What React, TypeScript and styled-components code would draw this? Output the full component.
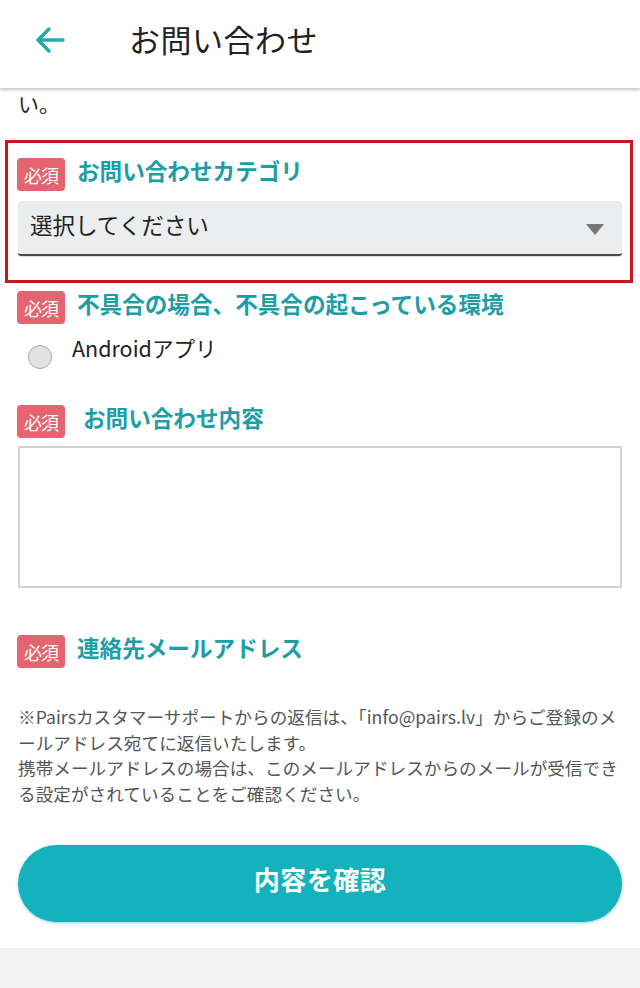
import React from "react";
import styled, { createGlobalStyle } from "styled-components";

const GlobalStyle = createGlobalStyle`
	html, body {
		margin: 0;
		padding: 0;
		background: #f2f2f2;
	}
	body {
		font-family: "Noto Sans CJK JP", "Noto Sans", sans-serif;
		color: #222;
	}
`;

const Page = styled.div`
	width: 640px;
	min-height: 988px;
	background: #f2f2f2;
`;

const Header = styled.header`
	position: relative;
	z-index: 1;
	height: 88px;
	display: flex;
	align-items: center;
	background: #fff;
	box-shadow: 0 2px 3px rgba(0, 0, 0, 0.22);
`;

const BackButton = styled.button`
	width: 30px;
	height: 30px;
	margin-left: 35px;
	margin-top: -8px;
	padding: 0;
	border: 0;
	background: none;
	display: flex;
	align-items: center;
	justify-content: center;
`;

const HeaderTitle = styled.h1`
	margin: -12px 0 0 64px;
	font-size: 31px;
	font-weight: 400;
	color: #222;
	letter-spacing: 0.5px;
`;

const Main = styled.main`
	background: #fff;
	padding: 0 18px 26px;
`;

const LeadText = styled.p`
	margin: 0;
	padding-top: 1px;
	padding-bottom: 1px;
	font-size: 21px;
	line-height: 28px;
	color: #222;
`;

const Highlight = styled.section`
	margin: 22px -11px 0 -13px;
	padding: 15px 8px 24px 10px;
	border: 3px solid #c8161d;
`;

const Field = styled.section<{ $top: number }>`
	margin-top: ${(p) => p.$top}px;
`;

const LabelRow = styled.div<{ $gap?: number }>`
	display: flex;
	align-items: center;
	gap: ${(p) => p.$gap ?? 12}px;
	height: 33px;
`;

const Badge = styled.span`
	display: inline-flex;
	align-items: center;
	justify-content: center;
	width: 48px;
	height: 33px;
	border-radius: 4px;
	background: #e5646f;
	color: #fff;
	font-size: 18px;
	letter-spacing: -1px;
	flex-shrink: 0;
	margin-left: -1px;
`;

const Label = styled.span`
	font-size: 22.6px;
	font-weight: 700;
	color: #1c9ea7;
	margin-top: -9px;
`;

const Select = styled.div`
	margin-top: 10px;
	height: 53px;
	display: flex;
	align-items: center;
	justify-content: space-between;
	padding: 0 18px 0 12px;
	background: #ecedee;
	border-radius: 4px 4px 3px 3px;
	border-bottom: 2px solid #4a4a4a;
	box-shadow: 0 1px 1px rgba(0, 0, 0, 0.15);
	font-size: 22.5px;
	color: #222;
`;

const SelectText = styled.span`
	margin-top: -7px;
`;

const Caret = styled.span`
	width: 0;
	height: 0;
	border-left: 9px solid transparent;
	border-right: 9px solid transparent;
	border-top: 11px solid #777;
	margin-top: 4px;
`;

const RadioRow = styled.label`
	display: flex;
	align-items: center;
	gap: 20px;
	margin-top: 14px;
	padding-left: 10px;
	height: 28px;
	font-size: 21.5px;
	color: #222;
`;

const RadioDot = styled.span`
	width: 22px;
	height: 22px;
	border-radius: 50%;
	background: #e2e2e2;
	border: 1.5px solid #a9a9a9;
	box-sizing: content-box;
	margin-top: 10px;
`;

const RadioText = styled.span`
	margin-top: -10px;
`;

const TextArea = styled.textarea`
	display: block;
	margin-top: 8px;
	width: 100%;
	height: 142px;
	box-sizing: border-box;
	border: 2px solid #d2d2d2;
	border-radius: 0;
	resize: none;
	font-family: inherit;
	background: #fff;
`;

const Note = styled.p`
	margin: 36px 0 0;
	font-size: 17.6px;
	line-height: 25.5px;
	color: #555;
	letter-spacing: 0.05px;
`;

const NoteLine = styled.span`
	display: block;
	white-space: nowrap;
`;

const SubmitButton = styled.button`
	display: block;
	width: 100%;
	height: 77px;
	margin-top: 39px;
	padding: 0 0 10px;
	border: 0;
	border-radius: 39px;
	background: #14b2bc;
	box-shadow: 0 1px 3px rgba(0, 160, 170, 0.45);
	color: #fff;
	font-family: inherit;
	font-size: 26px;
	font-weight: 700;
	letter-spacing: 0.5px;
`;

const BackArrow = () => (
	<svg width="30" height="28" viewBox="0 0 30 28" fill="none">
		<path
			d="M28 14H4M14 3L3 14l11 11"
			stroke="#26a9aa"
			strokeWidth="3.4"
			strokeLinecap="round"
			strokeLinejoin="round"
		/>
	</svg>
);

const App = () => {
	return (
		<Page>
			<GlobalStyle />
			<Header>
				<BackButton aria-label="戻る">
					<BackArrow />
				</BackButton>
				<HeaderTitle>お問い合わせ</HeaderTitle>
			</Header>
			<Main>
				<LeadText>い。</LeadText>

				<Highlight>
					<LabelRow>
						<Badge>必須</Badge>
						<Label>お問い合わせカテゴリ</Label>
					</LabelRow>
					<Select>
						<SelectText>選択してください</SelectText>
						<Caret />
					</Select>
				</Highlight>

				<Field $top={8}>
					<LabelRow>
						<Badge>必須</Badge>
						<Label>不具合の場合、不具合の起こっている環境</Label>
					</LabelRow>
					<RadioRow>
						<RadioDot />
						<RadioText>Androidアプリ</RadioText>
					</RadioRow>
				</Field>

				<Field $top={39}>
					<LabelRow $gap={18}>
						<Badge>必須</Badge>
						<Label>お問い合わせ内容</Label>
					</LabelRow>
					<TextArea />
				</Field>

				<Field $top={47}>
					<LabelRow>
						<Badge>必須</Badge>
						<Label>連絡先メールアドレス</Label>
					</LabelRow>
				</Field>

				<Note>
					<NoteLine>※Pairsカスタマーサポートからの返信は、「info@pairs.lv」からご登録のメ</NoteLine>
					<NoteLine>ールアドレス宛てに返信いたします。</NoteLine>
					<NoteLine>携帯メールアドレスの場合は、このメールアドレスからのメールが受信でき</NoteLine>
					<NoteLine>る設定がされていることをご確認ください。</NoteLine>
				</Note>

				<SubmitButton>内容を確認</SubmitButton>
			</Main>
		</Page>
	);
};

export default App;
